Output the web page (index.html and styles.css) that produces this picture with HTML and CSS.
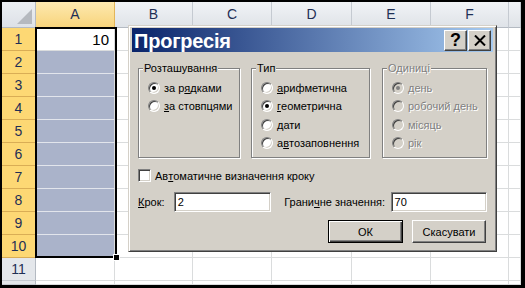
FILE: index.html
```html
<!DOCTYPE html>
<html lang="uk">
<head>
  <meta charset="UTF-8" />
  <title>Прогресія</title>
  <link rel="stylesheet" href="styles.css">
</head>
<body>
  <div class="screen">
    <!-- SHEET GRID (cells built by script below) -->
    <div class="sheet" id="sheet"></div>
    <div class="selection"><span class="fill-handle"></span></div>

    <!-- DIALOG -->
    <div class="dialog">
      <div class="titlebar">
        <span class="title">Прогресія</span>
        <div class="title-btns">
          <span class="tbtn">?</span>
          <span class="tbtn">
            <svg width="12" height="11" viewBox="0 0 12 11"><path d="M1 0.5 L11 10.5 M11 0.5 L1 10.5" stroke="#000" stroke-width="2"/></svg>
          </span>
        </div>
      </div>

      <div class="dlg-body">
        <div class="groups">
          <fieldset class="group g-place">
            <legend>Розташування</legend>
            <div class="opt"><span class="rb on"></span>за р<u>я</u>дками</div>
            <div class="opt"><span class="rb"></span><u>з</u>а стовпцями</div>
          </fieldset>
          <fieldset class="group g-type">
            <legend>Тип</legend>
            <div class="opt"><span class="rb"></span><u>а</u>рифметична</div>
            <div class="opt"><span class="rb on"></span><u>г</u>еометрична</div>
            <div class="opt"><span class="rb"></span><u>д</u>ати</div>
            <div class="opt"><span class="rb"></span>а<u>в</u>тозаповнення</div>
          </fieldset>
          <fieldset class="group g-units disabled">
            <legend>Одиниці</legend>
            <div class="opt"><span class="rb on"></span>день</div>
            <div class="opt"><span class="rb"></span>робочий день</div>
            <div class="opt"><span class="rb"></span>місяць</div>
            <div class="opt"><span class="rb"></span>рік</div>
          </fieldset>
        </div>

        <div class="auto-row"><span class="cb"></span>Ав<u>т</u>оматичне визначення кроку</div>

        <div class="step-row">
          <span class="lbl-step"><u>К</u>рок:</span>
          <span class="field">2</span>
          <span class="lbl-limit">Грани<u>ч</u>не значення:</span>
          <span class="field">70</span>
        </div>

        <div class="btn-row">
          <span class="btn default">ОК</span>
          <span class="btn">Скасувати</span>
        </div>
      </div>
    </div>
  </div>

  <script>
    const sheet = document.getElementById("sheet");
    const cols = ["", "A", "B", "C", "D", "E", "F", ""];

    function addCell(cls, text) {
      const cell = document.createElement("div");
      cell.className = "cell " + cls;
      cell.textContent = text || "";
      sheet.appendChild(cell);
    }

    // header row
    cols.forEach((c, i) => {
      if (i === 0) addCell("corner");
      else addCell(c === "A" ? "col-head sel" : "col-head", c);
    });

    // rows 1..11 plus a partial 12th
    for (let r = 1; r <= 12; r++) {
      addCell(r <= 10 ? "row-head sel" : "row-head", r <= 11 ? r : "");
      for (let c = 1; c < cols.length; c++) {
        if (c === 1 && r === 1) addCell("active", "10");
        else if (c === 1 && r <= 10) addCell("picked");
        else addCell("");
      }
    }
  </script>
</body>
</html>
```

FILE: styles.css
```css
* {
  box-sizing: border-box;
}

body {
  margin: 0;
  background: #000;
  font-family: 'Liberation Sans', Arial, sans-serif;
}

.screen {
  position: relative;
  width: 525px;
  height: 288px;
  border-style: solid;
  border-color: #000;
  border-width: 2px 4px 3px 2px;
  background: #fff;
  overflow: hidden;
}

/* Sheet */
.sheet {
  display: grid;
  grid-template-columns: 34px 79px 78px 79px 80px 79px 78px 1fr;
  grid-template-rows: 26px repeat(11, 23px) 1fr;
  height: 100%;
}

.cell {
  border-right: 1px solid #dadcdd;
  border-bottom: 1px solid #dadcdd;
  font-size: 14px;
  color: #000;
}

.corner {
  position: relative;
  background: linear-gradient(#eceff3, #dde1e7);
  border-right: 1px solid #b4bac2;
  border-bottom: 1px solid #b4bac2;
}

.corner::after {
  content: "";
  position: absolute;
  right: 3px;
  bottom: 3px;
  width: 15px;
  height: 15px;
  background: #b5b9bf;
  clip-path: polygon(100% 0, 100% 100%, 0 100%);
}

.col-head {
  background: linear-gradient(#f1f3f6, #dfe3e8);
  border-right: 1px solid #c5cad1;
  border-bottom: 1px solid #b4bac2;
  color: #1f2f55;
  text-align: center;
  line-height: 25px;
}

.col-head.sel {
  background: linear-gradient(#fde9b0, #f8d47c);
  border-right: 1px solid #e2b55a;
  border-bottom: 1px solid #f2a94a;
}

.row-head {
  background: #e4e7eb;
  border-right: 1px solid #b4bac2;
  border-bottom: 1px solid #c5cad1;
  color: #1f2f55;
  text-align: center;
  line-height: 23px;
}

.row-head.sel {
  background: #fdd874;
  border-right: 1px solid #e2b55a;
  border-bottom: 1px solid #d9ad55;
}

.active {
  text-align: right;
  padding-right: 5px;
  line-height: 23px;
  font-size: 15px;
}

.picked {
  background: #aab3ca;
  border-bottom-color: #e2e5ec;
}

.selection {
  position: absolute;
  left: 33px;
  top: 25px;
  width: 82px;
  height: 231px;
  border: 2px solid #000;
}

.fill-handle {
  position: absolute;
  right: -5px;
  bottom: -5px;
  width: 7px;
  height: 7px;
  background: #000;
  border: 1px solid #fff;
}

/* Dialog */
.dialog {
  position: absolute;
  left: 126px;
  top: 23px;
  width: 369px;
  height: 227px;
  background: #d4d0c8;
  padding: 2px 3px 3px 3px;
  border: 1px solid;
  border-color: #d4d0c8 #404040 #404040 #d4d0c8;
  box-shadow: inset 1px 1px 0 #fff, inset -1px -1px 0 #808080;
  font-size: 11px;
  color: #000;
  display: flex;
  flex-direction: column;
}

.titlebar {
  height: 24px;
  background: linear-gradient(to right, #0a246a, #a6caf0);
  display: flex;
  align-items: center;
  justify-content: space-between;
  padding: 0 2px;
}

.title {
  color: #fff;
  font-size: 20px;
  font-weight: bold;
  letter-spacing: -0.2px;
  margin-top: 2px;
}

.title-btns {
  display: flex;
  gap: 1px;
}

.tbtn {
  width: 23px;
  height: 21px;
  display: flex;
  align-items: center;
  justify-content: center;
  background: #d4d0c8;
  border: 1px solid;
  border-color: #fff #404040 #404040 #fff;
  box-shadow: inset -1px -1px 0 #808080;
  font-size: 18px;
  font-weight: bold;
}

.dlg-body {
  flex: 1;
  padding: 10px 6px 0 6px;
  display: flex;
  flex-direction: column;
}

.groups {
  display: flex;
}

.group {
  margin: 0;
  padding: 4px 0 0 0;
  height: 96px;
  border: 1px solid #808080;
  box-shadow: inset 1px 1px 0 #fff, 1px 1px 0 #fff;
}

.group legend {
  margin-left: 4px;
  padding: 0 1px;
  background: #d4d0c8;
  line-height: 13px;
}

.g-place {
  width: 102px;
}

.g-type {
  width: 119px;
  margin-left: 11px;
}

.g-units {
  width: 105px;
  margin-left: 12px;
}

.opt {
  display: flex;
  align-items: center;
  height: 18.3px;
  padding-left: 9px;
  white-space: nowrap;
}

.rb {
  position: relative;
  width: 12px;
  height: 12px;
  margin-right: 4px;
  border-radius: 50%;
  background: #fff;
  border: 1px solid;
  border-color: #808080 #fff #fff #808080;
  box-shadow: inset 1px 1px 0 #404040, inset -1px -1px 0 #d4d0c8;
}

.rb.on::after {
  content: "";
  position: absolute;
  left: 3px;
  top: 3px;
  width: 4px;
  height: 4px;
  border-radius: 50%;
  background: #000;
}

.disabled legend,
.disabled .opt {
  color: #808080;
  text-shadow: 1px 1px 0 #fff;
}

.disabled .rb {
  background: #d4d0c8;
}

.disabled .rb.on::after {
  background: #808080;
}

.auto-row {
  display: flex;
  align-items: center;
  margin-top: 11px;
  height: 13px;
}

.cb {
  width: 13px;
  height: 13px;
  margin-right: 4px;
  background: #fff;
  border: 1px solid;
  border-color: #808080 #fff #fff #808080;
  box-shadow: inset 1px 1px 0 #404040, inset -1px -1px 0 #d4d0c8;
}

.step-row {
  display: flex;
  align-items: center;
  margin-top: 10px;
}

.field {
  height: 20px;
  line-height: 18px;
  padding-left: 3px;
  background: #fff;
  border: 1px solid;
  border-color: #808080 #fff #fff #808080;
  box-shadow: inset 1px 1px 0 #404040, inset -1px -1px 0 #d4d0c8;
}

.lbl-step {
  width: 36px;
}

.step-row .field:nth-child(2) {
  width: 98px;
}

.lbl-limit {
  margin-left: 13px;
  width: 107px;
}

.step-row .field:nth-child(4) {
  width: 97px;
}

.btn-row {
  display: flex;
  justify-content: flex-end;
  gap: 9px;
  margin-top: 8px;
  padding-right: 1px;
}

.btn {
  width: 74px;
  height: 23px;
  display: flex;
  align-items: center;
  justify-content: center;
  background: #d4d0c8;
  border: 1px solid;
  border-color: #fff #404040 #404040 #fff;
  box-shadow: inset -1px -1px 0 #808080;
}

.btn.default {
  width: 75px;
  border: 1px solid #000;
  box-shadow: inset 1px 1px 0 #fff, inset -1px -1px 0 #404040, inset -2px -2px 0 #808080;
}
```
